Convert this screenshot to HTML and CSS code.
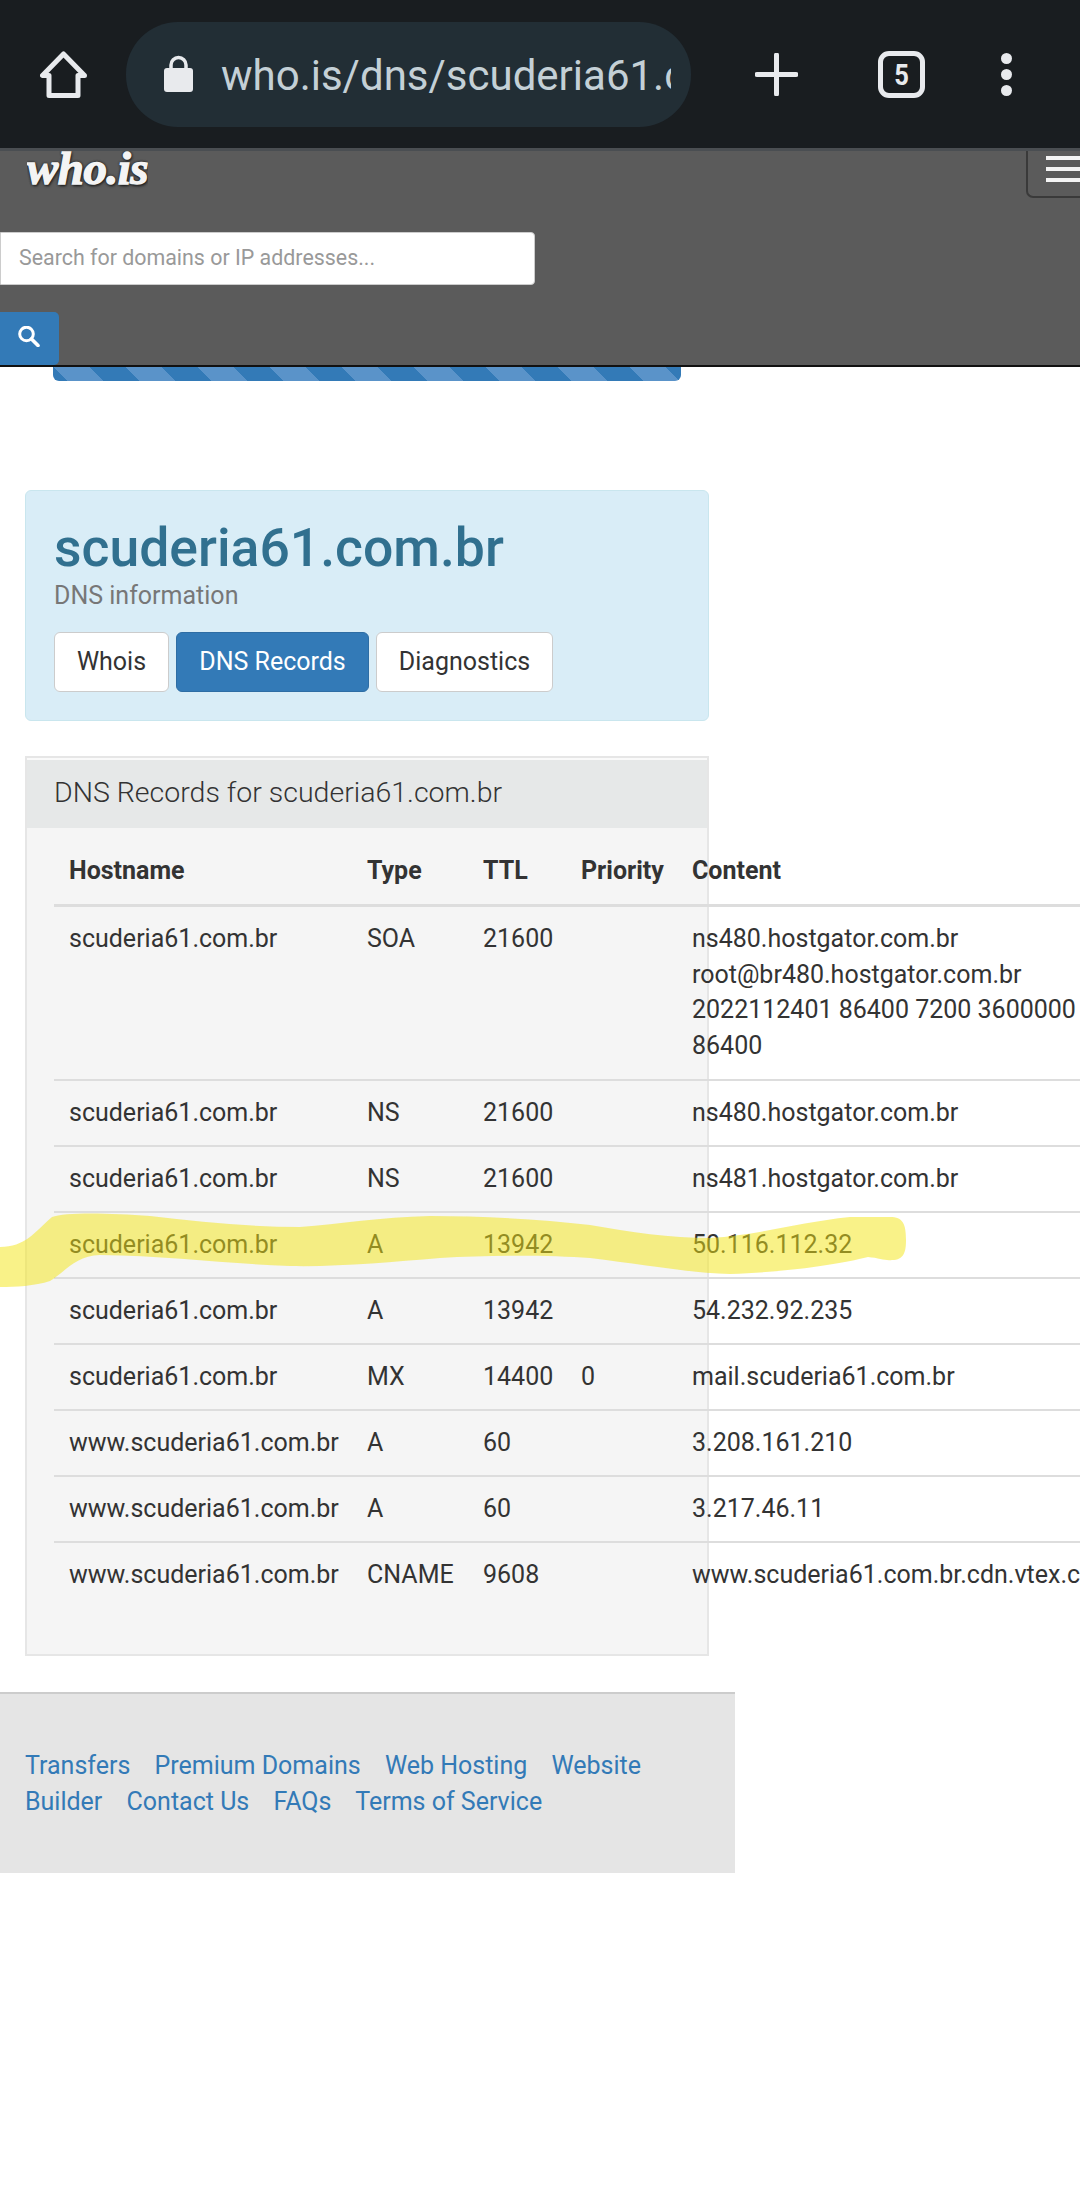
FILE: index.html
```html
<!DOCTYPE html>
<html lang="en">
<head>
<meta charset="utf-8">
<title>scuderia61.com.br DNS information</title>
<link rel="stylesheet" href="styles.css">
</head>
<body>
<div class="page">
  <div class="browser">
    <svg class="home" width="47" height="47" viewBox="0 0 47 47"><path d="M23.5 3 L2.5 24.5 H9 V44.5 H38 V24.5 H44.5 Z" fill="none" stroke="#e8eaed" stroke-width="5" stroke-linejoin="round"/></svg>
    <div class="urlbar">
      <svg class="lock" width="29" height="37" viewBox="0 0 29 37"><path d="M7 15 V10 a7.5 7.5 0 0 1 15 0 V15" fill="none" stroke="#e8eaed" stroke-width="3.5"/><rect x="0" y="13" width="29" height="24" rx="3" fill="#e8eaed"/></svg>
      <div class="url">who.is/dns/scuderia61.com.br</div>
    </div>
    <svg class="plus" width="43" height="43" viewBox="0 0 43 43"><path d="M21.5 2 V41 M2 21.5 H41" stroke="#e8eaed" stroke-width="5" stroke-linecap="round"/></svg>
    <div class="tabs"><span class="tabs-n">5</span></div>
    <div class="dots"><span class="dot"></span><span class="dot"></span><span class="dot"></span></div>
  </div>

  <header class="site">
    <div class="site-top">
      <div class="logo">who.is</div>
      <div class="toggle"><span class="bar"></span><span class="bar"></span><span class="bar"></span></div>
    </div>
    <div class="search-input">Search for domains or IP addresses...</div>
    <div class="search-btn">
      <svg width="22" height="21" viewBox="0 0 22 21"><circle cx="8.5" cy="8" r="6.8" fill="none" stroke="#fff" stroke-width="3"/><path d="M13.5 13 L20 19.5" stroke="#fff" stroke-width="3.6" stroke-linecap="round"/></svg>
    </div>
  </header>
  <div class="stripes"></div>

  <section class="jumbo">
    <h1 class="domain">scuderia61.com.br</h1>
    <div class="sub">DNS information</div>
    <div class="btns">
      <a class="btn btn-w">Whois</a>
      <a class="btn btn-active">DNS Records</a>
      <a class="btn btn-d">Diagnostics</a>
    </div>
  </section>

  <section class="panel">
    <div class="panel-head">DNS Records for scuderia61.com.br</div>
    <table class="records">
      <colgroup><col class="c1"><col class="c2"><col class="c3"><col class="c4"><col class="c5"></colgroup>
      <thead>
        <tr><th>Hostname</th><th>Type</th><th>TTL</th><th>Priority</th><th>Content</th></tr>
      </thead>
      <tbody>
        <tr><td>scuderia61.com.br</td><td>SOA</td><td>21600</td><td></td><td>ns480.hostgator.com.br root@br480.hostgator.com.br 2022112401 86400 7200 3600000 86400</td></tr>
        <tr><td>scuderia61.com.br</td><td>NS</td><td>21600</td><td></td><td>ns480.hostgator.com.br</td></tr>
        <tr><td>scuderia61.com.br</td><td>NS</td><td>21600</td><td></td><td>ns481.hostgator.com.br</td></tr>
        <tr><td>scuderia61.com.br</td><td>A</td><td>13942</td><td></td><td>50.116.112.32</td></tr>
        <tr><td>scuderia61.com.br</td><td>A</td><td>13942</td><td></td><td>54.232.92.235</td></tr>
        <tr><td>scuderia61.com.br</td><td>MX</td><td>14400</td><td>0</td><td>mail.scuderia61.com.br</td></tr>
        <tr><td>www.scuderia61.com.br</td><td>A</td><td>60</td><td></td><td>3.208.161.210</td></tr>
        <tr><td>www.scuderia61.com.br</td><td>A</td><td>60</td><td></td><td>3.217.46.11</td></tr>
        <tr><td>www.scuderia61.com.br</td><td>CNAME</td><td>9608</td><td></td><td>www.scuderia61.com.br.cdn.vtex.com</td></tr>
      </tbody>
    </table>
  </section>

  <footer class="foot">
    <a>Transfers</a> <a>Premium Domains</a> <a>Web Hosting</a> <a>Website Builder</a> <a>Contact Us</a> <a>FAQs</a> <a>Terms of Service</a>
  </footer>

  <svg class="marker" width="1080" height="100" viewBox="0 1200 1080 100"><path d="M0 1247 C25 1247 35 1232 52 1217 C65 1212 110 1213 150 1216 C200 1222 250 1227 300 1227 C340 1224 380 1217 430 1216 C480 1216 540 1219 590 1225 C630 1232 670 1238 710 1238 C760 1235 800 1222 850 1217 L890 1217 C903 1217 906 1224 906 1240 C906 1252 904 1260 892 1260 C885 1261 880 1258 868 1257 C840 1264 790 1272 730 1274 C690 1273 640 1264 590 1258 C550 1255 490 1255 440 1258 C390 1262 340 1267 290 1266 C230 1264 170 1256 100 1255 C75 1256 65 1272 50 1281 C35 1286 15 1287 0 1287 Z" fill="#f3e612" fill-opacity="0.5"/></svg>
</div>
</body>
</html>
```

FILE: styles.css
```css
* { box-sizing: border-box; }
html, body { margin: 0; padding: 0; background: #fff; }
body { font-family: Roboto, "Liberation Sans", sans-serif; color: #333; }
.page { position: relative; width: 1080px; height: 2195px; overflow: hidden; background: #fff; }

.browser { height: 151px; background: #191d20; border-bottom: 3px solid #4a4e52; display: flex; align-items: flex-start; padding-top: 22px; }
.home { margin: 29px 0 0 40px; flex: none; }
.urlbar { width: 565px; height: 105px; margin-left: 39px; border-radius: 52px; background: #222e35; display: flex; align-items: center; padding-left: 38px; flex: none; }
.lock { flex: none; margin-top: -2px; }
.url { width: 450px; margin-left: 28px; margin-top: 3px; overflow: hidden; white-space: nowrap; font-size: 42px; color: #c4d0d6; line-height: 60px; }
.plus { margin: 31px 0 0 64px; flex: none; }
.tabs { width: 47px; height: 47px; margin: 29px 0 0 80px; border: 5px solid #e8eaed; border-radius: 11px; color: #e8eaed; text-align: center; line-height: 37px; flex: none; }
.tabs-n { display: inline-block; font-size: 30px; font-weight: 700; transform: scaleX(0.85); }
.dots { margin: 31px 0 0 76px; display: flex; flex-direction: column; gap: 5px; flex: none; }
.dot { width: 11px; height: 11px; border-radius: 50%; background: #e8eaed; }

.site { height: 216px; background: #5b5b5b; border-bottom: 2px solid #111; }
.site-top { height: 81px; display: flex; justify-content: space-between; align-items: flex-start; }
.logo { margin: 0 0 0 27px; font-family: "Liberation Serif", serif; font-weight: 700; font-style: italic; font-size: 47px; line-height: 34px; height: 38px; overflow: hidden; letter-spacing: -0.5px; color: #f4f4f4; -webkit-text-stroke: 1.4px #f4f4f4; text-shadow: 0 0 3px #1c1c1c, 0 0 3px #1c1c1c, 0 0 2px #1c1c1c, 1px 2px 3px #1c1c1c; }
.toggle { width: 54px; height: 47px; border: 2px solid #3a3a3a; border-top: 0; border-right: 0; border-bottom-left-radius: 7px; padding: 5px 0 0 18px; display: flex; flex-direction: column; gap: 7px; }
.bar { display: block; height: 4px; width: 35px; background: #f4f4f4; flex: none; }
.search-input { width: 535px; height: 53px; background: #fff; border: 1px solid #ccc; border-radius: 0 4px 4px 0; padding-left: 18px; font-size: 21.4px; line-height: 49px; color: #999; }
.search-btn { width: 59px; height: 53px; margin-top: 27px; background: #337ab7; border-radius: 0 5px 5px 0; display: flex; align-items: center; justify-content: center; padding-right: 1px; padding-bottom: 4px; }

.stripes { width: 628px; height: 14px; margin-left: 53px; background-color: #337ab7; background-image: linear-gradient(45deg, #5a93c9 25%, transparent 25%, transparent 50%, #5a93c9 50%, #5a93c9 75%, transparent 75%, transparent); background-size: 72px 72px; border-radius: 0 0 6px 6px; }

.jumbo { width: 684px; height: 231px; margin: 109px 0 0 25px; background: #d9edf7; border: 1px solid #c9e6ee; border-radius: 6px; padding: 27px 0 0 28px; }
.domain { margin: 0; font-size: 53.5px; line-height: 60px; font-weight: 500; color: #31708f; }
.sub { font-size: 25px; line-height: 36px; color: #777; }
.btns { display: flex; gap: 7px; margin-top: 18px; }
.btn { display: block; height: 60px; line-height: 58px; font-size: 25px; text-align: center; border: 1px solid #ccc; border-radius: 6px; background: #fff; color: #333; }
.btn-w { width: 115px; }
.btn-active { width: 193px; background: #337ab7; border-color: #2e6da4; color: #fff; }
.btn-d { width: 177px; }

.panel { width: 684px; height: 900px; margin: 35px 0 0 25px; background: #f5f5f5; border: 2px solid #e6e6e6; }
.panel-head { height: 70px; border-top: 2px solid #fafafa; background: #e6e8e8; padding-left: 27px; font-size: 28.5px; font-weight: 300; line-height: 65px; color: #333; }
.records { margin: 11px 0 0 27px; width: 1060px; table-layout: fixed; border-collapse: collapse; font-size: 25px; line-height: 35.7px; }
.c1 { width: 298px; } .c2 { width: 116px; } .c3 { width: 98px; } .c4 { width: 111px; } .c5 { width: 437px; }
.records th { text-align: left; font-weight: 700; padding: 14px 15px 15px; border-bottom: 3px solid #ddd; }
.records td { padding: 14.2px 15px; border-top: 2px solid #ddd; vertical-align: top; }
.records tbody tr:first-child td { border-top: 0; padding-bottom: 15px; }
.records td:last-child { padding-right: 25px; }

.foot { width: 735px; height: 181px; margin-top: 36px; background: #e5e5e5; border-top: 2px solid #ccc; padding: 54px 25px 0 25px; font-size: 25px; line-height: 36px; }
.foot a { color: #337ab7; margin-right: 18px; }

.marker { position: absolute; left: 0; top: 1200px; pointer-events: none; }
```
